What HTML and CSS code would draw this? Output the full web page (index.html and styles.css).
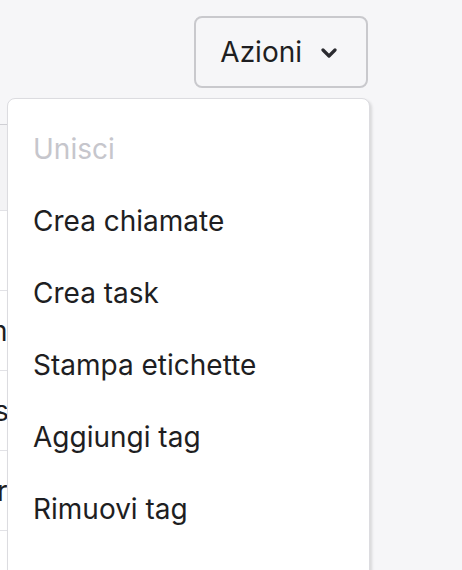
FILE: index.html
```html
<!DOCTYPE html>
<html lang="it">
<head>
  <meta charset="UTF-8">
  <meta name="viewport" content="width=device-width, initial-scale=1.0">
  <title>Azioni</title>
  <link rel="stylesheet" href="styles.css">
</head>
<body>

<div class="page">
  <div class="toolbar">
    <div class="actions">
      <button class="actions-btn">
        Azioni
        <svg class="chevron" width="16" height="10" viewBox="0 0 16 10" fill="none">
          <path d="M2 2l6 6 6-6" stroke="#2b2b30" stroke-width="3.2" stroke-linecap="round" stroke-linejoin="round"/>
        </svg>
      </button>

      <!-- Dropdown menu -->
      <ul class="menu">
        <li class="menu-item disabled">Unisci</li>
        <li class="menu-item">Crea chiamate</li>
        <li class="menu-item">Crea task</li>
        <li class="menu-item">Stampa etichette</li>
        <li class="menu-item">Aggiungi tag</li>
        <li class="menu-item">Rimuovi tag</li>
      </ul>
    </div>
  </div>

  <table class="list">
    <tr class="head"><td></td></tr>
    <tr><td></td></tr>
    <tr><td class="cut-m">m</td></tr>
    <tr><td class="cut-s">s</td></tr>
    <tr><td class="cut-r">r</td></tr>
    <tr><td></td></tr>
  </table>
</div>

</body>
</html>
```

FILE: styles.css
```css
* {
  box-sizing: border-box;
}
body {
  margin: 0;
  background-color: #f6f6f8;
  font-family: Inter, "Noto Sans", sans-serif;
  color: #1e1e22;
  overflow: hidden;
}
.page {
  width: 462px;
  height: 570px;
  overflow: hidden;
}
.toolbar {
  display: flex;
  justify-content: flex-end;
  padding: 16px 94px 0 0;
}
.actions {
  position: relative;
}
.actions-btn {
  display: flex;
  align-items: center;
  gap: 19px;
  height: 72px;
  padding: 0 29px 0 24px;
  background-color: #f6f6f8;
  color: #1e1e22;
  border: 2px solid #c9c9cd;
  border-radius: 8px;
  font-family: inherit;
  font-size: 28px;
  cursor: pointer;
}
.chevron {
  margin-top: 2px;
}
/* Dropdown */
.menu {
  position: absolute;
  top: 82px;
  right: -2px;
  width: 363px;
  margin: 0;
  padding: 14px 0 60px;
  list-style: none;
  background-color: #fff;
  border: 1px solid #dcdce0;
  border-radius: 8px;
  box-shadow: 2px 2px 3px rgba(0, 0, 0, 0.12);
  z-index: 10;
}
.menu-item {
  height: 72px;
  line-height: 72px;
  padding-left: 25px;
  font-size: 28px;
  color: #1e1e22;
}
.menu-item.disabled {
  color: #c6c6cc;
}
/* Table behind the menu */
.list {
  margin-top: 36px;
  margin-left: -40px;
  border-collapse: collapse;
  width: 400px;
}
.list td {
  height: 80px;
  border-bottom: 1px solid #e2e2e6;
  font-size: 28px;
  padding: 0;
  background-color: #fff;
}
.list .head td {
  height: 86px;
  border-top: 1px solid #cfcfd4;
  background-color: #f3f3f5;
}
.cut-m {
  text-indent: 23px;
}
.cut-s {
  text-indent: 34px;
}
.cut-r {
  text-indent: 37px;
}
```
